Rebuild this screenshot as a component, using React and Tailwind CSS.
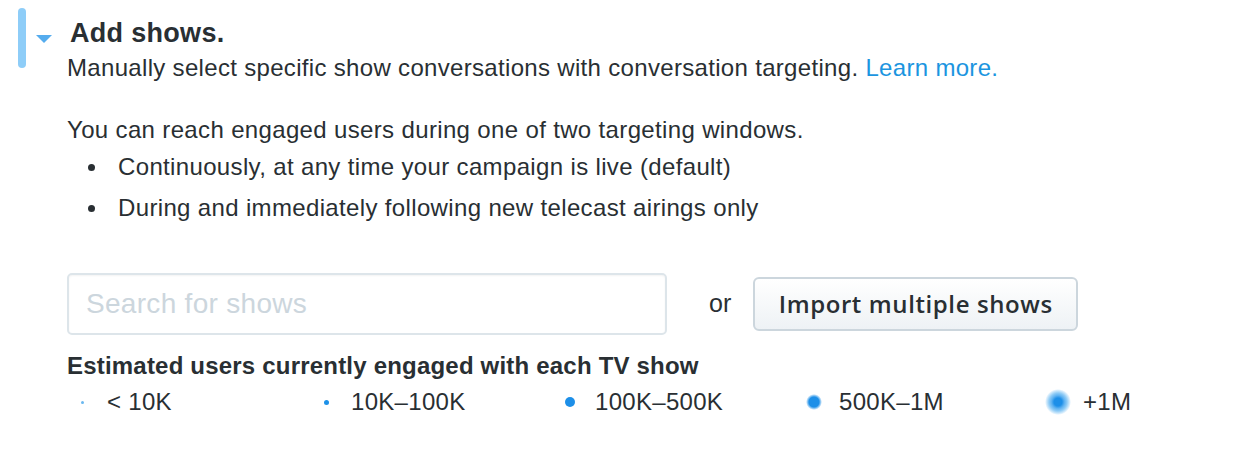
export default function App() {
  const dots = [
    { label: "< 10K", el: <span className="block w-[3px] h-[3px] rounded-full bg-[#6ab8f0]" /> },
    { label: "10K–100K", el: <span className="block w-[5px] h-[5px] rounded-full bg-[#1d91e8]" /> },
    { label: "100K–500K", el: <span className="block w-[10px] h-[10px] rounded-full bg-[#1d8fe8] blur-[0.4px]" /> },
    { label: "500K–1M", el: <span className="block w-[16px] h-[16px] rounded-full bg-[radial-gradient(circle,#1d8fe8_0,#1d8fe8_5px,rgba(29,143,232,0.5)_6.5px,rgba(29,143,232,0)_8px)]" /> },
    {
      label: "+1M",
      el: (
        <span className="block w-[26px] h-[26px] rounded-full bg-[radial-gradient(circle,#1d8fe8_0,#1d8fe8_4px,#5fb2f1_6.5px,#8ecbf6_9px,rgba(142,203,246,0.4)_11.5px,rgba(142,203,246,0)_13px)]" />
      ),
    },
  ];
  return (
    <div className="w-[1244px] h-[456px] bg-white text-[#292f33] font-['Liberation_Sans',Arial,sans-serif]">
      <div className="flex pt-[8px] pl-[18px]">
        <div className="w-[8px] h-[60px] rounded-[4px] bg-[#8ecdf8]" />
        <div className="ml-[10px] pt-[27px]">
          <svg width="16" height="9" viewBox="0 0 16 9" className="block"><polygon points="0,0 16,0 8,8" fill="#55acee" /></svg>
        </div>
        <div className="ml-[15px] flex flex-col">
          <div className="ml-[3px] mt-[10px] text-[27px] leading-[30px] font-bold tracking-[0.3px]">Add shows.</div>
          <div className="mt-[6px] text-[24px] leading-[28px] tracking-[0.32px]">
            Manually select specific show conversations with conversation targeting. <span className="text-[#1b95e0]">Learn more.</span>
          </div>
        </div>
      </div>
      <div className="pl-[67px]">
        <div className="mt-[34px] text-[24px] leading-[28px] tracking-[0.35px]">You can reach engaged users during one of two targeting windows.</div>
        <ul className="mt-[9px] text-[24px] leading-[28px] tracking-[0.35px] flex flex-col gap-[13px]">
          <li className="flex items-center"><span className="w-[7px] h-[7px] rounded-full bg-[#292f33] ml-[21px] mr-[23px]" />Continuously, at any time your campaign is live (default)</li>
          <li className="flex items-center"><span className="w-[7px] h-[7px] rounded-full bg-[#292f33] ml-[21px] mr-[23px]" />During and immediately following new telecast airings only</li>
        </ul>
        <div className="flex items-center mt-[51px]">
          <div className="w-[600px] h-[62px] border-2 border-[#dde5ea] rounded-[5px] flex items-center pl-[17px] text-[28px] tracking-[0.3px] text-[#ccd6dd] shadow-[inset_0_1px_2px_rgba(0,0,0,0.05)]">
            Search for shows
          </div>
          <div className="ml-[42px] text-[25px] text-[#292f33]">or</div>
          <button className="ml-[22px] w-[325px] h-[54px] rounded-[6px] border-2 border-[#ccd6dd] bg-gradient-to-b from-[#ffffff] to-[#eef2f5] text-[24px] font-semibold text-[#292f33] tracking-[0.6px] font-['Open_Sans',sans-serif]">
            Import multiple shows
          </button>
        </div>
        <div className="mt-[19px] text-[24px] font-bold leading-[24px] tracking-[0.2px]">Estimated users currently engaged with each TV show</div>
        <div className="flex mt-[12px]">
          {dots.map((d, i) => (
            <div key={i} className="w-[244px] shrink-0 flex items-center h-[24px] text-[24px] tracking-[0.3px]">
              <div className="w-[30px] flex justify-center">{d.el}</div>
              <span className="ml-[10px]">{d.label}</span>
            </div>
          ))}
        </div>
      </div>
    </div>
  );
}
